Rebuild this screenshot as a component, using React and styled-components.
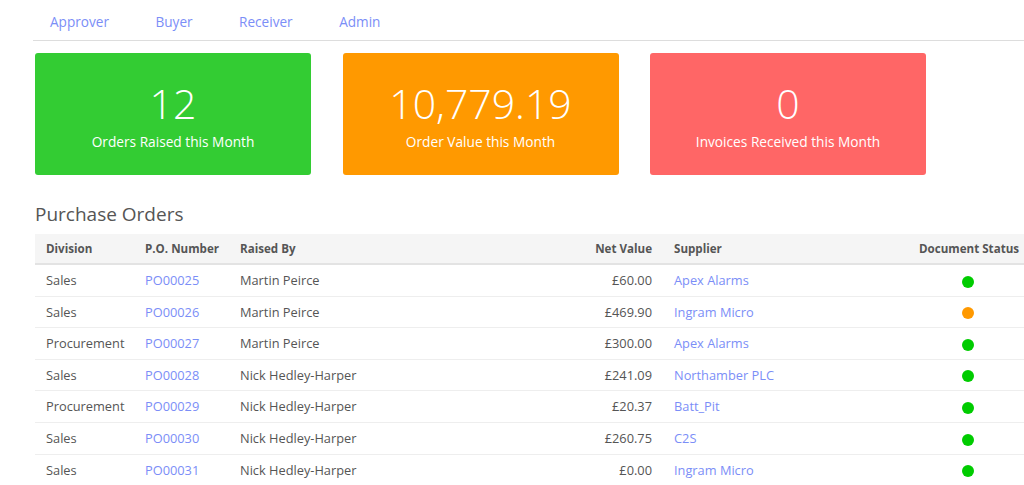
import React from 'react';
import styled, { createGlobalStyle } from 'styled-components';

const GlobalStyle = createGlobalStyle`
  html, body {
    margin: 0;
    padding: 0;
    background: #fff;
    overflow-x: hidden;
  }
  body {
    font-family: "Open Sans", "Liberation Sans", Arial, sans-serif;
    font-size: 13px;
    color: #555;
  }
`;

const navItems = ['Approver', 'Buyer', 'Receiver', 'Admin'];

const stats = [
  { value: '12', label: 'Orders Raised this Month', color: '#33cc33' },
  { value: '10,779.19', label: 'Order Value this Month', color: '#ff9900' },
  { value: '0', label: 'Invoices Received this Month', color: '#ff6666' },
];

const orders = [
  { division: 'Sales', po: 'PO00025', by: 'Martin Peirce', net: '£60.00', supplier: 'Apex Alarms', status: 'ok' },
  { division: 'Sales', po: 'PO00026', by: 'Martin Peirce', net: '£469.90', supplier: 'Ingram Micro', status: 'pending' },
  { division: 'Procurement', po: 'PO00027', by: 'Martin Peirce', net: '£300.00', supplier: 'Apex Alarms', status: 'ok' },
  { division: 'Sales', po: 'PO00028', by: 'Nick Hedley-Harper', net: '£241.09', supplier: 'Northamber PLC', status: 'ok' },
  { division: 'Procurement', po: 'PO00029', by: 'Nick Hedley-Harper', net: '£20.37', supplier: 'Batt_Pit', status: 'ok' },
  { division: 'Sales', po: 'PO00030', by: 'Nick Hedley-Harper', net: '£260.75', supplier: 'C2S', status: 'ok' },
  { division: 'Sales', po: 'PO00031', by: 'Nick Hedley-Harper', net: '£0.00', supplier: 'Ingram Micro', status: 'ok' },
];

export default function App() {
  return (
    <>
      <GlobalStyle />
      <Page>
        <Nav>
          {navItems.map(item => (
            <NavLink key={item} href="#">
              {item}
            </NavLink>
          ))}
        </Nav>
        <Content>
          <Cards>
            {stats.map(s => (
              <Card key={s.label} $bg={s.color}>
                <Value>{s.value}</Value>
                <Label>{s.label}</Label>
              </Card>
            ))}
          </Cards>
          <Heading>Purchase Orders</Heading>
          <Table>
            <colgroup>
              <col style={{ width: 99 }} />
              <col style={{ width: 95 }} />
              <col style={{ width: 280 }} />
              <col style={{ width: 154 }} />
              <col style={{ width: 245 }} />
              <col style={{ width: 120 }} />
            </colgroup>
            <thead>
              <tr>
                <Th>Division</Th>
                <Th>P.O. Number</Th>
                <Th>Raised By</Th>
                <Th $align="right">Net Value</Th>
                <Th>Supplier</Th>
                <Th $align="center">Document Status</Th>
              </tr>
            </thead>
            <tbody>
              {orders.map(o => (
                <tr key={o.po}>
                  <Td>{o.division}</Td>
                  <Td>
                    <Link href="#">{o.po}</Link>
                  </Td>
                  <Td>{o.by}</Td>
                  <Td $align="right">{o.net}</Td>
                  <Td>
                    <Link href="#">{o.supplier}</Link>
                  </Td>
                  <Td $align="center">
                    <Dot $status={o.status} />
                  </Td>
                </tr>
              ))}
            </tbody>
          </Table>
        </Content>
      </Page>
    </>
  );
}

const Page = styled.div`
  padding-left: 33px;
  width: 1000px;
`;

const Nav = styled.nav`
  display: flex;
  gap: 46.5px;
  padding: 12px 0 0 17px;
  height: 28px;
  border-bottom: 1px solid #dddddd;
`;

const NavLink = styled.a`
  font-size: 13.6px;
  line-height: 20px;
  color: #7b8ef7;
  text-decoration: none;
`;

const Content = styled.div`
  padding-left: 2px;
`;

const Cards = styled.div`
  display: flex;
  gap: 31.5px;
  margin-top: 12px;
`;

const Card = styled.div`
  width: 276px;
  height: 122px;
  box-sizing: border-box;
  padding-top: 28px;
  border-radius: 3px;
  background: ${p => p.$bg};
  color: #fff;
  text-align: center;
`;

const Value = styled.div`
  font-size: 41px;
  font-weight: 300;
  line-height: 44px;
`;

const Label = styled.div`
  margin-top: 7px;
  font-size: 13.7px;
  line-height: 20px;
`;

const Heading = styled.h3`
  margin: 27px 0 8px;
  font-size: 19px;
  font-weight: 400;
  line-height: 24px;
  color: #555;
`;

const Table = styled.table`
  width: 993px;
  table-layout: fixed;
  border-collapse: collapse;
`;

const Th = styled.th`
  padding: 6px 11px 5px;
  background: #f5f5f5;
  border-bottom: 2px solid #e3e3e3;
  font-size: 11.6px;
  font-weight: 700;
  line-height: 18px;
  color: #555;
  text-align: ${p => p.$align || 'left'};
  white-space: nowrap;
`;

const Td = styled.td`
  padding: 6px 11px;
  border-bottom: 1px solid #eeeeee;
  font-size: 12.8px;
  line-height: 18.6px;
  color: #555;
  text-align: ${p => p.$align || 'left'};
  white-space: nowrap;
`;

const Link = styled.a`
  color: #7b8ef7;
  text-decoration: none;
`;

const Dot = styled.span`
  display: inline-block;
  width: 12px;
  height: 12px;
  border-radius: 50%;
  vertical-align: middle;
  background: ${p => (p.$status === 'pending' ? '#ff9900' : '#00cc00')};
`;
